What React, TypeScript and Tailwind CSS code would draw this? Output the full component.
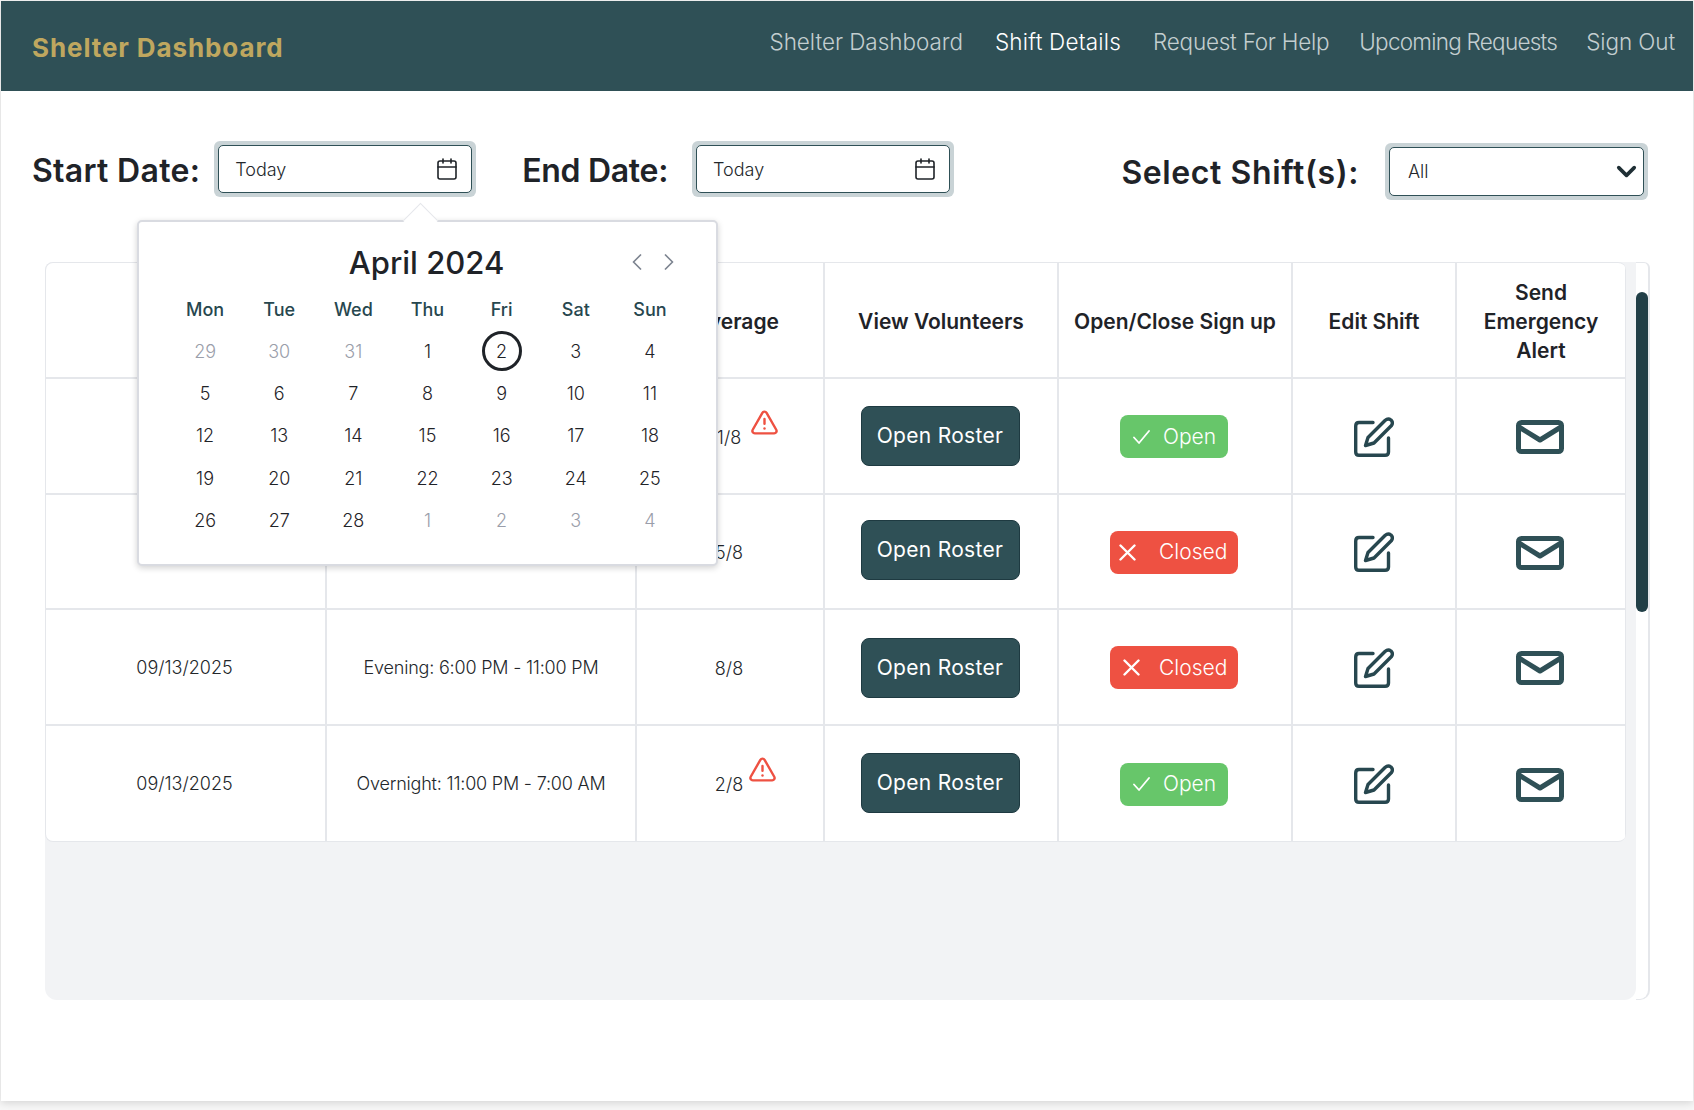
import { Calendar, ChevronDown, ChevronLeft, ChevronRight, TriangleAlert } from "lucide-react";

const GRID = "grid grid-cols-[281px_310px_188px_234px_234px_164px_169px]";

const rows = [
  { h: "h-[116px]", date: "", shift: "", cov: "1/8", alert: true, open: true, xPad: "", btn: "" },
  { h: "h-[115px]", date: "", shift: "", cov: "5/8", alert: false, open: false, xPad: "pl-[9px] gap-[23px]", btn: "mb-[4px]" },
  { h: "h-[116px]", date: "09/13/2025", shift: "Evening: 6:00 PM - 11:00 PM", cov: "8/8", alert: false, open: false, xPad: "pl-[13px] gap-[19px]", btn: "mt-[2px]" },
  { h: "h-[115px]", date: "09/13/2025", shift: "Overnight: 11:00 PM - 7:00 AM", cov: "2/8", alert: true, open: true, xPad: "", btn: "mb-[2px]" },
];

const days: { d: number; muted?: boolean; sel?: boolean }[] = [
  { d: 29, muted: true }, { d: 30, muted: true }, { d: 31, muted: true }, { d: 1 }, { d: 2, sel: true }, { d: 3 }, { d: 4 },
  { d: 5 }, { d: 6 }, { d: 7 }, { d: 8 }, { d: 9 }, { d: 10 }, { d: 11 },
  { d: 12 }, { d: 13 }, { d: 14 }, { d: 15 }, { d: 16 }, { d: 17 }, { d: 18 },
  { d: 19 }, { d: 20 }, { d: 21 }, { d: 22 }, { d: 23 }, { d: 24 }, { d: 25 },
  { d: 26 }, { d: 27 }, { d: 28 }, { d: 1, muted: true }, { d: 2, muted: true }, { d: 3, muted: true }, { d: 4, muted: true },
];

function EditIcon() {
  return (
    <svg width="40" height="40" viewBox="0 0 40 40" fill="none" stroke="#27474f" strokeWidth="3.4" strokeLinecap="round" strokeLinejoin="round">
      <path d="M19 5.5H5Q1.7 5.5 1.7 9V35Q1.7 38.3 5 38.3H31Q34.5 38.3 34.5 35V21" />
      <path d="M11.5 28.5L14 20.5L31 3.5Q34 .8 37 3Q39.5 5.5 37.5 8.5L20 26Z" />
    </svg>
  );
}

function MailIcon() {
  return (
    <svg width="48" height="34" viewBox="0 0 48 34" fill="none" stroke="#2f5056" strokeWidth="5" strokeLinejoin="round">
      <rect x="2.5" y="2.5" width="43" height="29" rx="3" />
      <path d="M3 7L24 20L45 7" />
    </svg>
  );
}

function CheckMark() {
  return (
    <svg width="17" height="14" viewBox="0 0 17 14" fill="none" stroke="white" strokeWidth="1.8" strokeLinecap="round" strokeLinejoin="round" className="shrink-0">
      <path d="M1 7.5L6 13L16 1" />
    </svg>
  );
}

function CrossMark() {
  return (
    <svg width="17" height="17" viewBox="0 0 17 17" fill="none" stroke="white" strokeWidth="2.4" strokeLinecap="round" className="shrink-0">
      <path d="M1.5 1.5L15.5 15.5M15.5 1.5L1.5 15.5" />
    </svg>
  );
}

function DateField({ ml }: { ml: string }) {
  return (
    <div className={`${ml} h-[56px] w-[262px] rounded-[6px] bg-[#c9d3d6] p-[4px]`}>
      <div className="flex h-full items-center justify-between rounded-[5px] border-[1.5px] border-[#2f5056] bg-white pl-[16px] pr-[12px]">
        <span className="text-[18px] font-light text-[#23272b]">Today</span>
        <Calendar size={24} strokeWidth={1.6} className="text-[#1f2328]" />
      </div>
    </div>
  );
}

export default function App() {
  return (
    <div className="h-[1110px] overflow-hidden bg-[#f7f7f7] pl-px pr-px pt-px font-[Inter,sans-serif]">
      <div className="h-[1100px] bg-white shadow-[0_2px_8px_rgba(0,0,0,0.14)]">
        <header className="flex h-[90px] items-start justify-between bg-[#2f5056] pl-[31px] pr-[18px]">
          <div className="mt-[30px] text-[26px] font-bold leading-[34px] tracking-[0.9px] text-[#bfa75f]">Shelter&nbsp;Dashboard</div>
          <nav className="mt-[26px] flex text-[22.5px] font-light leading-[30px] text-[#c3ced0]">
            <span className="tracking-[-0.05px]">Shelter Dashboard</span>
            <span className="ml-[32px] tracking-[0.2px] text-white">Shift Details</span>
            <span className="ml-[32px] tracking-[-0.24px]">Request For Help</span>
            <span className="ml-[30px] tracking-[-0.75px]">Upcoming Requests</span>
            <span className="ml-[29px] tracking-[-0.1px]">Sign Out</span>
          </nav>
        </header>

        <main className="relative pl-[31px] pr-[43px]">
          <div className="flex items-start pt-[50px]">
            <div className="flex items-center">
              <span className="pt-[3px] text-[32px] font-semibold leading-[53px] tracking-[0.3px] text-[#1f2328]">Start Date:</span>
              <DateField ml="ml-[14px]" />
              <span className="ml-[46px] pt-[3px] text-[32px] font-semibold leading-[53px] tracking-[-0.3px] text-[#1f2328]">End Date:</span>
              <DateField ml="ml-[24px]" />
            </div>
            <div className="ml-auto mr-[2px] mt-[2px] flex items-center">
              <span className="pt-[2px] text-[32px] font-semibold leading-[55px] tracking-[0.6px] text-[#1f2328]">Select Shift(s):</span>
              <div className="ml-[26px] h-[57px] w-[263px] rounded-[6px] bg-[#c9d3d6] p-[4px]">
                <div className="flex h-full items-center justify-between rounded-[5px] border-[1.5px] border-[#2f5056] bg-white pl-[18px] pr-[1px]">
                  <span className="text-[18px] font-light text-[#23272b]">All</span>
                  <ChevronDown size={31} strokeWidth={2.8} className="text-[#1f2f35]" />
                </div>
              </div>
            </div>
          </div>

          <section className="ml-[13px] mt-[62px] flex h-[738px]">
            <div className="flex-1 rounded-b-[12px] rounded-tl-[8px] bg-[#f2f3f5]">
              <div className="w-[1581px] overflow-hidden rounded-[8px] border-b border-l border-t border-[#e5e7eb] bg-white">
                <div className={`${GRID} h-[116px] border-b-2 border-[#e5e7eb] text-center text-[21px] font-semibold text-[#1f2328]`}>
                  <div className="border-r-2 border-[#e5e7eb]" />
                  <div className="border-r-2 border-[#e5e7eb]" />
                  <div className="flex items-center justify-center border-r-2 border-[#e5e7eb] pt-[3px]">Coverage</div>
                  <div className="flex items-center justify-center border-r-2 border-[#e5e7eb] pt-[3px]">View Volunteers</div>
                  <div className="flex items-center justify-center border-r-2 border-[#e5e7eb] pt-[3px]">Open/Close Sign up</div>
                  <div className="flex items-center justify-center border-r-2 border-[#e5e7eb] pt-[3px]">Edit Shift</div>
                  <div className="flex items-center justify-center border-r border-[#e5e7eb] pt-[2px] leading-[29px]">Send<br />Emergency<br />Alert</div>
                </div>
                {rows.map((r, i) => (
                  <div key={i} className={`${GRID} ${r.h} ${i < 3 ? "border-b-2" : ""} border-[#e5e7eb] text-[18px] font-light text-[#23272b]`}>
                    <div className="flex items-center justify-center border-r-2 border-[#e5e7eb] pr-[2px]">{r.date}</div>
                    <div className="flex items-center justify-center border-r-2 border-[#e5e7eb] tracking-[-0.2px]">{r.shift}</div>
                    <div className="flex items-center justify-center border-r-2 border-[#e5e7eb] pr-[2px] pt-[2px]">
                      <span className="relative">
                        {r.cov}
                        {r.alert && <TriangleAlert size={29} strokeWidth={2} className="absolute left-[33px] top-[-16px] text-[#ee5142]" />}
                      </span>
                    </div>
                    <div className="flex items-center justify-center border-r-2 border-[#e5e7eb] pr-[2px]">
                      <div className={`${r.btn} flex h-[60px] w-[159px] items-center justify-center rounded-[8px] border border-[#1e3a41] bg-[#2f5056] text-[21px] font-normal tracking-[0.3px] text-white`}>Open Roster</div>
                    </div>
                    <div className="flex items-center justify-center border-r-2 border-[#e5e7eb] pr-[2px] pt-[1px]">
                      {r.open ? (
                        <div className="flex h-[43px] w-[108px] items-center gap-[13px] rounded-[8px] bg-[#67c66a] pl-[13px] text-[21px] font-light text-white">
                          <CheckMark />
                          <span>Open</span>
                        </div>
                      ) : (
                        <div className={`flex h-[43px] w-[128px] items-center rounded-[8px] bg-[#ee5142] text-[21px] font-light text-white ${r.xPad}`}>
                          <CrossMark />
                          <span>Closed</span>
                        </div>
                      )}
                    </div>
                    <div className="flex items-center justify-center border-r-2 border-[#e5e7eb] pt-[1px]">
                      <EditIcon />
                    </div>
                    <div className="flex items-center justify-center border-r border-[#e5e7eb] pr-[3px] pt-[2px]">
                      <MailIcon />
                    </div>
                  </div>
                ))}
              </div>
            </div>
            <div className="h-full w-[14px] rounded-br-[10px] rounded-tr-[6px] border-y border-r-2 border-[#e5e7eb] pt-[29px]">
              <div className="h-[320px] w-[12px] rounded-full bg-[#213f47]" />
            </div>
          </section>

          <div className="absolute left-[136px] top-[129px] h-[346px] w-[581px] rounded-[5px] border-2 border-[#d9dbe1] bg-white shadow-[0_2px_6px_rgba(0,0,0,0.18)]">
            <div className="absolute left-[269px] top-[-14px] h-[25px] w-[25px] rotate-45 border-l border-t border-[#e5e7eb] bg-white" />
            <div className="relative mt-[17px] text-center text-[31px] font-medium leading-[48px] text-[#1f2328]">
              <span className="relative left-[-1px]">April 2024</span>
              <div className="absolute right-[33px] top-[9px] flex gap-[4px] text-[#7d8490]">
                <ChevronLeft size={28} strokeWidth={1.5} />
                <ChevronRight size={28} strokeWidth={1.5} />
              </div>
            </div>
            <div className="mx-[29px] mt-[8px] grid grid-cols-7 text-center">
              {["Mon", "Tue", "Wed", "Thu", "Fri", "Sat", "Sun"].map((w) => (
                <div key={w} className="h-[35px] text-[18px] font-medium leading-[30px] text-[#27474f]">{w}</div>
              ))}
              {days.map((c, i) => (
                <div key={i} className="flex h-[42.4px] items-center justify-center text-[18px] font-light">
                  <span className={c.sel ? "flex h-[40px] w-[40px] items-center justify-center rounded-full border-[3px] border-[#1f2328] text-[#1f2328]" : c.muted ? "text-[#9a9eaa]" : "text-[#1f2328]"}>
                    {c.d}
                  </span>
                </div>
              ))}
            </div>
          </div>
        </main>
      </div>
    </div>
  );
}
